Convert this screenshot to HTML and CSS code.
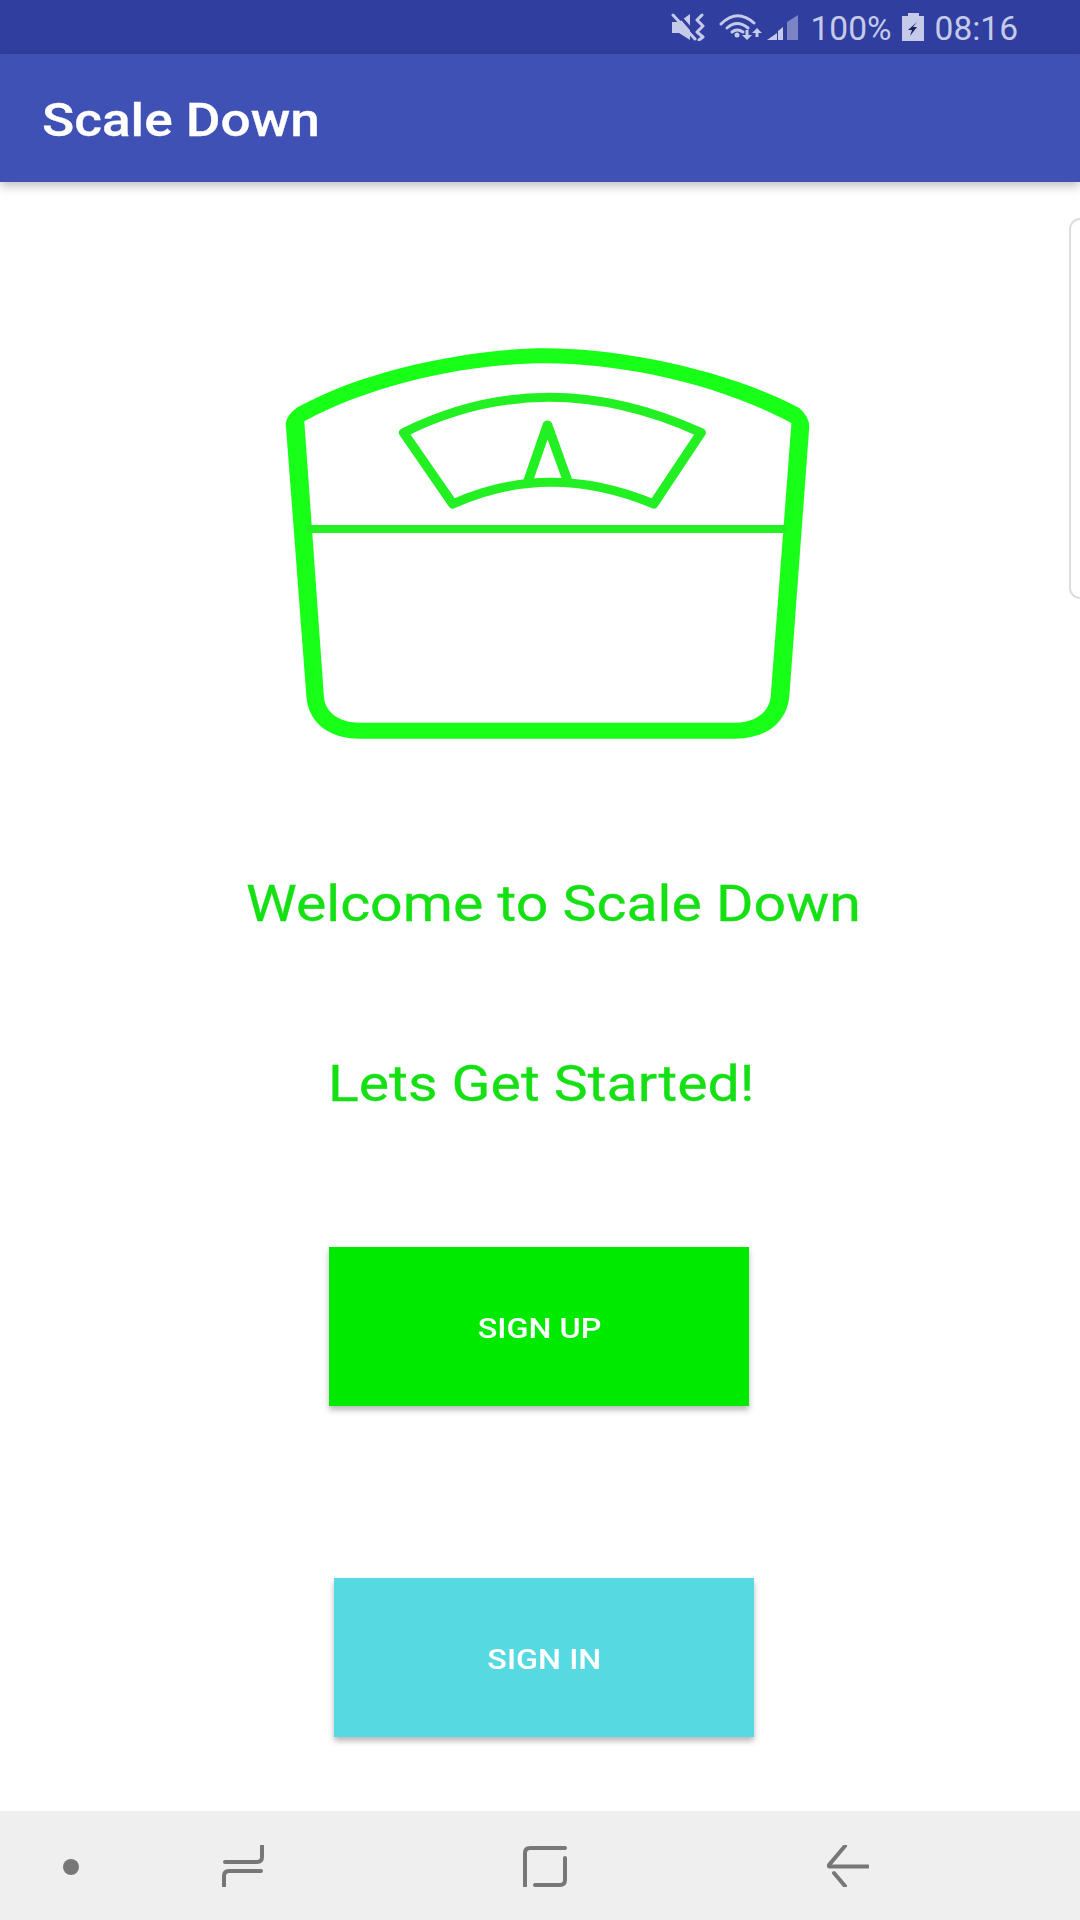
FILE: index.html
```html
<!DOCTYPE html>
<html lang="en">
<head>
<meta charset="utf-8">
<title>Scale Down</title>
<link rel="stylesheet" href="styles.css">
</head>
<body>
<div class="screen">
  <header class="status-bar">
    <svg class="ic-mute" viewBox="0 0 34 28" width="34" height="28">
      <path class="si" d="M1 9H8L19 1V27L8 20H1Z"/>
      <path class="sgap" d="M6 0L26 23"/>
      <path class="sl" d="M2 2L24 26"/>
      <path class="sl" d="M31 2L26 7L32 13L26 19L32 24L28 27"/>
    </svg>
    <svg class="ic-wifi" viewBox="0 0 44 28" width="44" height="28">
      <path class="sl" d="M3 11Q19-5 36 10"/>
      <path class="sl" d="M9 15Q19 6 30 15"/>
      <path class="sl" d="M14 19Q19 15 25 19"/>
      <circle class="si" cx="19" cy="22" r="2.500"/>
      <path class="si" d="M27.500 17h3v5h3.500l-5 5-5-5h3.500z"/>
      <path class="si" d="M39 15l5 5h-3.500v4h-3v-4H34z"/>
    </svg>
    <svg class="ic-signal" viewBox="0 0 31 28" width="31" height="28">
      <path class="si" d="M0 27L10 20V27Z"/>
      <path class="si" d="M11 18L16 14V27H11Z"/>
      <path class="si dim" d="M20 9L31 2V27H20Z"/>
    </svg>
    <span class="status-text pct">100%</span>
    <svg class="ic-batt" viewBox="0 0 22 28" width="22" height="28">
      <path class="si" d="M6 3V0H17V3H22V28H0V3Z"/>
      <path class="bolt" d="M15 9L6 17H10L8 23L15 14H11Z"/>
    </svg>
    <span class="status-text time">08:16</span>
  </header>
  <div class="app-bar"><h1 class="app-title">Scale Down</h1></div>

  <main class="content">
    <svg class="scale" viewBox="0 0 1568 1320" width="560" height="440" preserveAspectRatio="none">
      <path class="scale-fill" fill-rule="evenodd" d="M72 310Q75 285 105 262C300 145 600 85 800 85C1000 85 1300 145 1510 264Q1538 290 1538 320L1482 1130C1475 1205 1420 1256 1330 1256L280 1256C190 1256 135 1205 130 1130ZM124 304C320 190 590 130 800 130C1010 130 1280 190 1488 309L1430 1130C1425 1175 1390 1208 1330 1208L280 1208C220 1208 182 1175 179 1130Z"/>
      <path class="scale-bar" d="M130 627H1475"/>
      <path class="scale-line" d="M402 338Q800 126 1235 338L1102 552Q810 422 540 552Z"/>
      <path class="scale-line" d="M750 485L805 315L862 485"/>
    </svg>
    <p class="welcome">Welcome to Scale Down</p>
    <p class="started">Lets Get Started!</p>
    <button class="btn btn-up" type="button"><span class="btn-label">SIGN UP</span></button>
    <button class="btn btn-in" type="button"><span class="btn-label">SIGN IN</span></button>
    <div class="edge-handle"></div>
  </main>

  <nav class="nav-bar">
    <svg class="nav-dot" viewBox="0 0 16 20" width="16" height="20"><ellipse class="nf" cx="8" cy="10" rx="8" ry="8"/></svg>
    <svg class="nav-recents" viewBox="0 0 42 42" width="42" height="42">
      <path class="ns" d="M40 1V12Q40 17 35 17H3"/>
      <path class="ns" d="M39 26H7Q2 26 2 31V41"/>
    </svg>
    <svg class="nav-home" viewBox="0 0 44 42" width="44" height="42">
      <path class="ns" d="M2 41V8Q2 3 7 3H42"/>
      <path class="ns" d="M42 13V35Q42 40 37 40H12"/>
    </svg>
    <svg class="nav-back" viewBox="0 0 42 42" width="42" height="42">
      <path class="ns" d="M18 1L2 20Q1 21.500 3 21.500H41"/>
      <path class="ns" d="M7 28L18 41"/>
    </svg>
  </nav>
</div>
</body>
</html>
```
FILE: styles.css
```css
html, body { margin: 0; padding: 0; }
body { width: 1080px; height: 1920px; overflow: hidden; background: #fff; font-family: Roboto, "Liberation Sans", sans-serif; }
.screen { width: 1080px; height: 1920px; display: flex; flex-direction: column; }

.status-bar { height: 54px; flex: none; background: #303f9f; display: flex; align-items: center; padding-right: 62px; justify-content: flex-end; box-sizing: border-box; }
.status-text { color: #c5cae9; font-size: 33.500px; line-height: 54px; padding-top: 4px; }
.si { fill: #c5cae9; }
.si.dim { opacity: .5; }
.sl { fill: none; stroke: #c5cae9; stroke-width: 3; stroke-linecap: round; stroke-linejoin: round; }
.sgap { fill: none; stroke: #303f9f; stroke-width: 3; }
.bolt { fill: #1a2460; }
.ic-wifi { margin-left: 13px; }
.ic-signal { margin-left: 5px; }
.pct { margin-left: 13px; }
.ic-batt { margin-left: 10px; }
.time { margin-left: 11px; }

.app-bar { height: 128px; flex: none; background: #3f51b5; display: flex; align-items: center; padding: 4px 0 0 42px; box-sizing: border-box; box-shadow: 0 4px 10px rgba(0,0,0,.25); position: relative; z-index: 1; }
.app-title { margin: 0; color: #fff; font-size: 46px; font-weight: 500; -webkit-text-stroke: .3px #fff; transform: scaleX(1.156); transform-origin: left center; }

.content { flex: 1; position: relative; display: flex; flex-direction: column; align-items: flex-start; }
.scale { margin: 138px 0 0 260px; flex: none; display: block; filter: blur(.5px); }
.scale-fill { fill: #18ff18; }
.scale-bar { fill: none; stroke: #22f022; stroke-width: 24; }
.scale-line { fill: none; stroke: #22f022; stroke-width: 27; stroke-linejoin: round; }

.welcome, .started { margin: 0; color: #14e014; font-size: 49.500px; line-height: 64px; white-space: nowrap; -webkit-text-stroke: .3px #14e014; transform: scaleX(1.156); transform-origin: left center; }
.welcome { margin: 112px 0 0 246px; }
.started { margin: 116px 0 0 328px; }

.btn { border: 0; width: 420px; height: 159px; color: #fff; font-family: Roboto, "Liberation Sans", sans-serif; font-size: 28px; font-weight: 500; box-shadow: 0 4px 6px rgba(0,0,0,.28); padding: 4px 0 0; }
.btn-label { display: inline-block; transform: scaleX(1.156); }
.btn-up { background: #00ea00; margin: 131px 0 0 329px; }
.btn-in { background: #57d9e2; margin: 172px 0 0 334px; }

.edge-handle { position: absolute; right: 0; top: 36px; width: 9px; height: 377px; border: 2px solid #ddd; border-right: 0; border-radius: 12px 0 0 12px; background: #fff; }

.nav-bar { height: 109px; flex: none; background: #efefef; display: flex; align-items: center; padding-left: 63px; box-sizing: border-box; }
.nav-dot { margin-top: 2px; }
.ns { fill: none; stroke: #777; stroke-width: 4; stroke-linecap: round; }
.nf { fill: #777; }
.nav-recents { margin-left: 143px; }
.nav-home { margin-left: 259px; }
.nav-back { margin-left: 260px; }
```
